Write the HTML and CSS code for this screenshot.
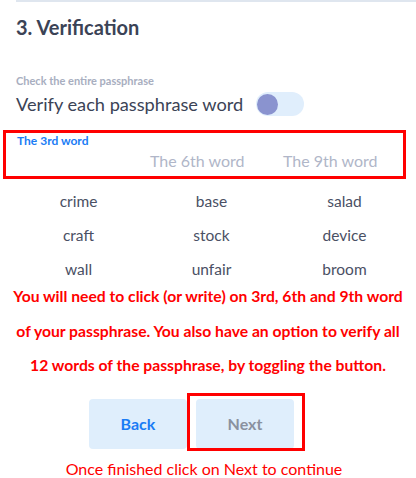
FILE: index.html
```html
<!DOCTYPE html>
<html>
<head>
<meta charset="utf-8">
<link rel="stylesheet" href="styles.css">
</head>
<body>
<div class="divider"></div>
<h2 class="title">3. Verification</h2>
<div class="hint">Check the entire passphrase</div>
<div class="toggle-row">
  <span class="toggle-label">Verify each passphrase word</span>
  <span class="toggle"><span class="knob"></span></span>
</div>
<div class="fields">
  <div class="field active"><span class="field-label">The 3rd word</span></div>
  <div class="field"><span class="placeholder">The 6th word</span></div>
  <div class="field"><span class="placeholder">The 9th word</span></div>
</div>
<div class="words">
  <div class="word">crime</div><div class="word">base</div><div class="word">salad</div>
  <div class="word">craft</div><div class="word">stock</div><div class="word">device</div>
  <div class="word">wall</div><div class="word">unfair</div><div class="word">broom</div>
</div>
<p class="note">You will need to click (or write) on 3rd, 6th and 9th word<br>of your passphrase. You also have an option to verify all<br>12 words of the passphrase, by toggling the button.</p>
<div class="buttons">
  <button class="btn back">Back</button>
  <button class="btn next">Next<span class="mark"></span></button>
</div>
<p class="note2">Once finished click on Next to continue</p>
</body>
</html>
```
FILE: styles.css
```css
html, body {
  margin: 0;
  padding: 0;
  background: #ffffff;
  font-family: Lato, "Open Sans", sans-serif;
  width: 416px;
  height: 478px;
  overflow: hidden;
}
.divider {
  margin-left: 16px;
  height: 2px;
  background: #dfe6ef;
}
.title {
  margin: 13px 0 0 16px;
  font-size: 20px;
  font-weight: 700;
  color: #3b4356;
  line-height: 24px;
}
.hint {
  margin: 35px 0 0 16px;
  font-size: 11px;
  font-weight: 700;
  color: #a8aec0;
  line-height: 14px;
}
.toggle-row {
  display: flex;
  align-items: center;
  gap: 13px;
  margin: 3px 0 0 16px;
  height: 26px;
}
.toggle-label {
  font-size: 18.2px;
  color: #3b4356;
}
.toggle {
  width: 48px;
  height: 24px;
  border-radius: 12px;
  background: #e0eefc;
  display: flex;
  align-items: center;
  padding-left: 1px;
  box-sizing: border-box;
}
.knob {
  width: 21px;
  height: 21px;
  border-radius: 50%;
  background: #8a93cf;
}
.fields {
  margin: 13px 0 0 3px;
  width: 397px;
  height: 43px;
  border: 3px solid #ff0000;
  display: grid;
  grid-template-columns: 133px 133px 131px;
}
.field {
  padding-left: 11px;
}
.field-label {
  display: block;
  font-size: 12px;
  font-weight: 700;
  color: #1a7cf5;
  line-height: 14px;
  margin-top: 1px;
}
.placeholder {
  display: block;
  font-size: 16px;
  color: #b0b6c8;
  margin-top: 18px;
  line-height: 20px;
}
.words {
  margin: 0 0 0 12px;
  width: 399px;
  height: 91px;
  overflow: hidden;
  display: grid;
  grid-template-columns: repeat(3, 133px);
  grid-auto-rows: 34px;
  padding-top: 6px;
}
.word {
  text-align: center;
  font-size: 15.5px;
  color: #4a5064;
  line-height: 33.5px;
}
.note {
  margin: 3px 0 0 0;
  text-align: center;
  color: #ff0000;
  font-size: 15.7px;
  font-weight: 700;
  line-height: 34.5px;
}
.buttons {
  display: flex;
  gap: 9px;
  padding-left: 89px;
  margin-top: 16px;
}
.btn {
  width: 98px;
  height: 50px;
  border: none;
  border-radius: 4px;
  background: #dfeefc;
  font-family: inherit;
  font-size: 16px;
  font-weight: 700;
  padding: 0;
}
.back { color: #1a7cf5; }
.next {
  color: #8a919f;
  position: relative;
}
.mark {
  position: absolute;
  left: -9px;
  top: -6px;
  width: 112px;
  height: 52px;
  border: 3px solid #ff0000;
}
.note2 {
  margin: 10px 0 0 0;
  padding-right: 8px;
  text-align: center;
  color: #ff0000;
  font-size: 16px;
  font-weight: 400;
  line-height: 20px;
}
```
